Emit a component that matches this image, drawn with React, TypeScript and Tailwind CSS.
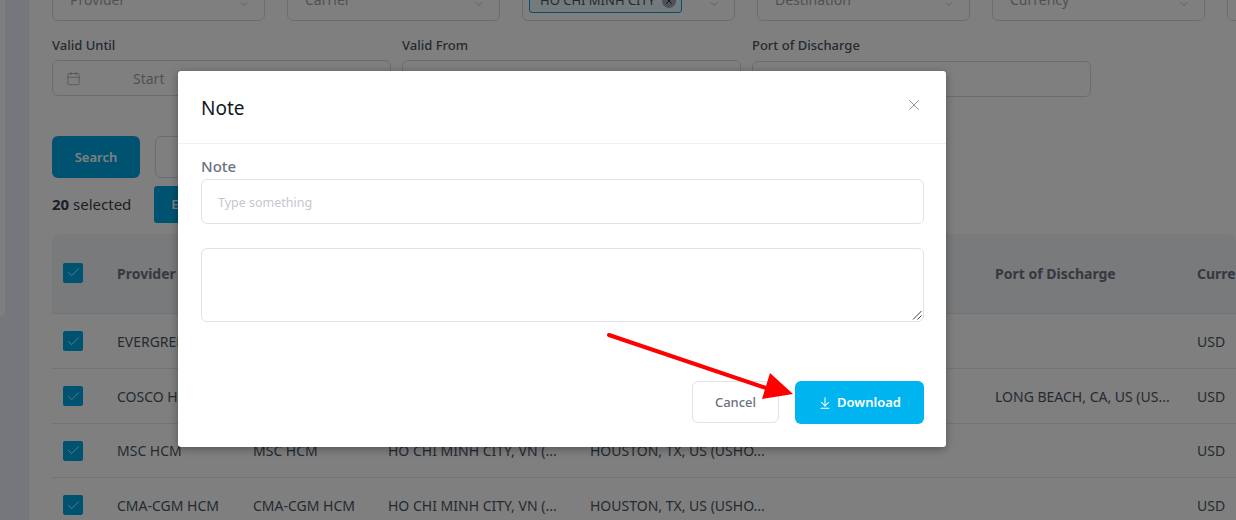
import { ArrowDownToLine, Calendar, Check, ChevronDown, X } from "lucide-react";

const font = "font-['Noto_Sans','Open_Sans',sans-serif]";

function Select({ text, tag }: { text?: string; tag?: string }) {
  return (
    <div className="flex h-[44px] w-[213px] shrink-0 items-end justify-between rounded-md border border-[#d9dbe3] bg-white pb-[10px] pl-[17px] pr-[14px]">
      {tag ? (
        <div className="-ml-[11px] -mb-[3px] flex h-[24px] w-[153px] shrink-0 items-center justify-between rounded-[3px] border border-[#119ed0] bg-[#e6f6fc] pl-[10px] pr-[5px] text-[13px] text-[#4b5563]">
          {tag}
          <span className="flex h-[14px] w-[14px] items-center justify-center rounded-full bg-[#9ca3af]">
            <X size={10} color="#111827" />
          </span>
        </div>
      ) : (
        <span className="text-[14px] leading-[20px] text-[#9ca3af]">{text}</span>
      )}
      <ChevronDown size={12} color="#c0c3cc" />
    </div>
  );
}

const cols = "grid grid-cols-[65px_136px_135px_202px_405px_202px_100px]";

function Box({ top }: { top?: boolean }) {
  return (
    <div className={`ml-[11px] flex h-[20px] w-[20px] items-center justify-center rounded-[2px] bg-[#00a7e1] ${top ? "-mt-[2px]" : ""}`}>
      <Check size={15} color="#ffffff" strokeWidth={1.25} />
    </div>
  );
}

function Row({ a, b, c, d, e, h }: { a: string; b: string; c: string; d: string; e?: string; h: string }) {
  return (
    <div className={`${cols} ${h} shrink-0 items-center border-b border-[#e5e7eb] text-[14px] text-[#4b5563]`}>
      <Box />
      <span>{a}</span>
      <span>{b}</span>
      <span>{c}</span>
      <span>{d}</span>
      <span>{e}</span>
      <span>USD</span>
    </div>
  );
}

export default function App() {
  return (
    <div className={`${font} relative flex h-[520px] w-[1236px] overflow-hidden bg-[#eceef9]`}>
      <div className="h-[317px] w-[5px] shrink-0 rounded-br-md bg-[#fcfcfc]" />
      <div className="ml-[24px] flex h-[520px] w-[1207px] shrink-0 flex-col overflow-hidden bg-white pl-[23px]">
        <div className="-mt-[23px] flex shrink-0 gap-[22px] whitespace-nowrap">
          <Select text="Provider" />
          <Select text="Carrier" />
          <Select tag="HO CHI MINH CITY" />
          <Select text="Destination" />
          <Select text="Currency" />
          <Select />
        </div>
        <div className="mt-[15px] flex shrink-0 gap-[11px]">
          <div className="w-[339px]">
            <div className="text-[13px] font-medium leading-[18px] text-[#4b5563]">Valid Until</div>
            <div className="mt-[6px] flex h-[36px] items-center rounded-md border border-[#d9dbe3] pl-[13px]">
              <Calendar size={15} color="#9ca3af" strokeWidth={1.25} />
              <span className="ml-[52px] text-[14px] text-[#9ca3af]">Start</span>
            </div>
          </div>
          <div className="w-[339px]">
            <div className="text-[13px] font-medium leading-[18px] text-[#4b5563]">Valid From</div>
            <div className="mt-[6px] h-[36px] rounded-md border border-[#d9dbe3]" />
          </div>
          <div className="w-[339px]">
            <div className="text-[13px] font-medium leading-[18px] text-[#4b5563]">Port of Discharge</div>
            <div className="mt-[7px] h-[36px] rounded-md border border-[#d9dbe3]" />
          </div>
        </div>
        <div className="mt-[39px] flex shrink-0 gap-[15px]">
          <div className="flex h-[42px] w-[88px] items-center justify-center rounded-md bg-[#00a7e1] pt-[1px] text-[13px] font-semibold text-white">Search</div>
          <div className="h-[42px] w-[88px] rounded-md border border-[#d9dbe3]" />
        </div>
        <div className="mt-[8px] flex shrink-0 items-center gap-[23px]">
          <div className="text-[15px] text-[#374151]">
            <span className="font-bold">20</span> selected
          </div>
          <div className="flex h-[37px] w-[88px] items-center rounded-[3px] bg-[#00a7e1] pl-[17px] text-[13px] font-semibold text-white">Export</div>
        </div>
        <div className={`${cols} mt-[11px] h-[80px] shrink-0 items-center rounded-t-lg border-b border-[#e5e7eb] bg-[#f3f4f6] text-[14px] font-bold text-[#6b7280]`}>
          <Box top />
          <span>Provider</span>
          <span>Carrier</span>
          <span>Port of Loading</span>
          <span>Port of Destination</span>
          <span>Port of Discharge</span>
          <span className="whitespace-nowrap">Currency</span>
        </div>
        <Row h="h-[55px]" a="EVERGREEN HCM" b="EVERGREEN HCM" c="HO CHI MINH CITY, VN (..." d="HOUSTON, TX, US (USHO..." />
        <Row h="h-[55px]" a="COSCO HCM" b="COSCO HCM" c="HO CHI MINH CITY, VN (..." d="HOUSTON, TX, US (USHO..." e="LONG BEACH, CA, US (US..." />
        <Row h="h-[54px]" a="MSC HCM" b="MSC HCM" c="HO CHI MINH CITY, VN (..." d="HOUSTON, TX, US (USHO..." />
        <Row h="h-[55px]" a="CMA-CGM HCM" b="CMA-CGM HCM" c="HO CHI MINH CITY, VN (..." d="HOUSTON, TX, US (USHO..." />
      </div>

      <div className="absolute inset-0 bg-black/50" />

      <div className="absolute left-[178px] top-[71px] h-[376px] w-[768px] rounded-[3px] bg-white shadow-[0_2px_8px_rgba(0,0,0,0.35)]">
        <div className="flex h-[73px] items-center justify-between border-b border-[#eef0f3] pl-[23px] pr-[24px]">
          <span className="mt-[3px] text-[19px] text-[#111827]">Note</span>
          <X size={18} color="#8c9097" strokeWidth={1.25} className="-mt-[4px] -mr-[1px]" />
        </div>
        <div className="pl-[23px] pr-[22px]">
          <div className="mt-[13px] text-[15px] font-medium leading-[18px] text-[#6b7280]">Note</div>
          <div className="mt-[4px] flex h-[45px] items-center rounded-md border border-[#e0e2e9] pl-[16px] pt-[3px] text-[12.5px] text-[#c4c7d0]">Type something</div>
          <div className="relative mt-[24px] h-[74px]">
            <textarea className="block h-[74px] w-full resize-none rounded-md border border-[#e0e2e9] outline-none" />
            <svg className="absolute bottom-[2px] right-[2px]" width="10" height="10" viewBox="0 0 10 10">
              <path d="M1 9.5 L9.5 1 M5.5 9.5 L9.5 5.5" stroke="#444" strokeWidth="1" fill="none" />
            </svg>
          </div>
          <div className="mt-[59px] flex justify-end gap-[16px]">
            <div className="flex h-[42px] w-[87px] items-center justify-center rounded-md border border-[#e0e2e9] pt-[2px] text-[13px] font-medium text-[#6b7280]">Cancel</div>
            <div className="flex h-[43px] w-[129px] items-center justify-center gap-[5px] rounded-md bg-[#00b4f0] text-[13px] font-semibold text-white">
              <ArrowDownToLine size={14} strokeWidth={1.75} />
              Download
            </div>
          </div>
        </div>
      </div>

      <svg className="pointer-events-none absolute left-[600px] top-[325px]" width="210" height="80" viewBox="0 0 210 80">
        <line x1="9" y1="10" x2="172" y2="65" stroke="#ff0000" strokeWidth="4" strokeLinecap="round" />
        <polygon points="170,48 193,69 162,74" fill="#ff0000" />
      </svg>
    </div>
  );
}
